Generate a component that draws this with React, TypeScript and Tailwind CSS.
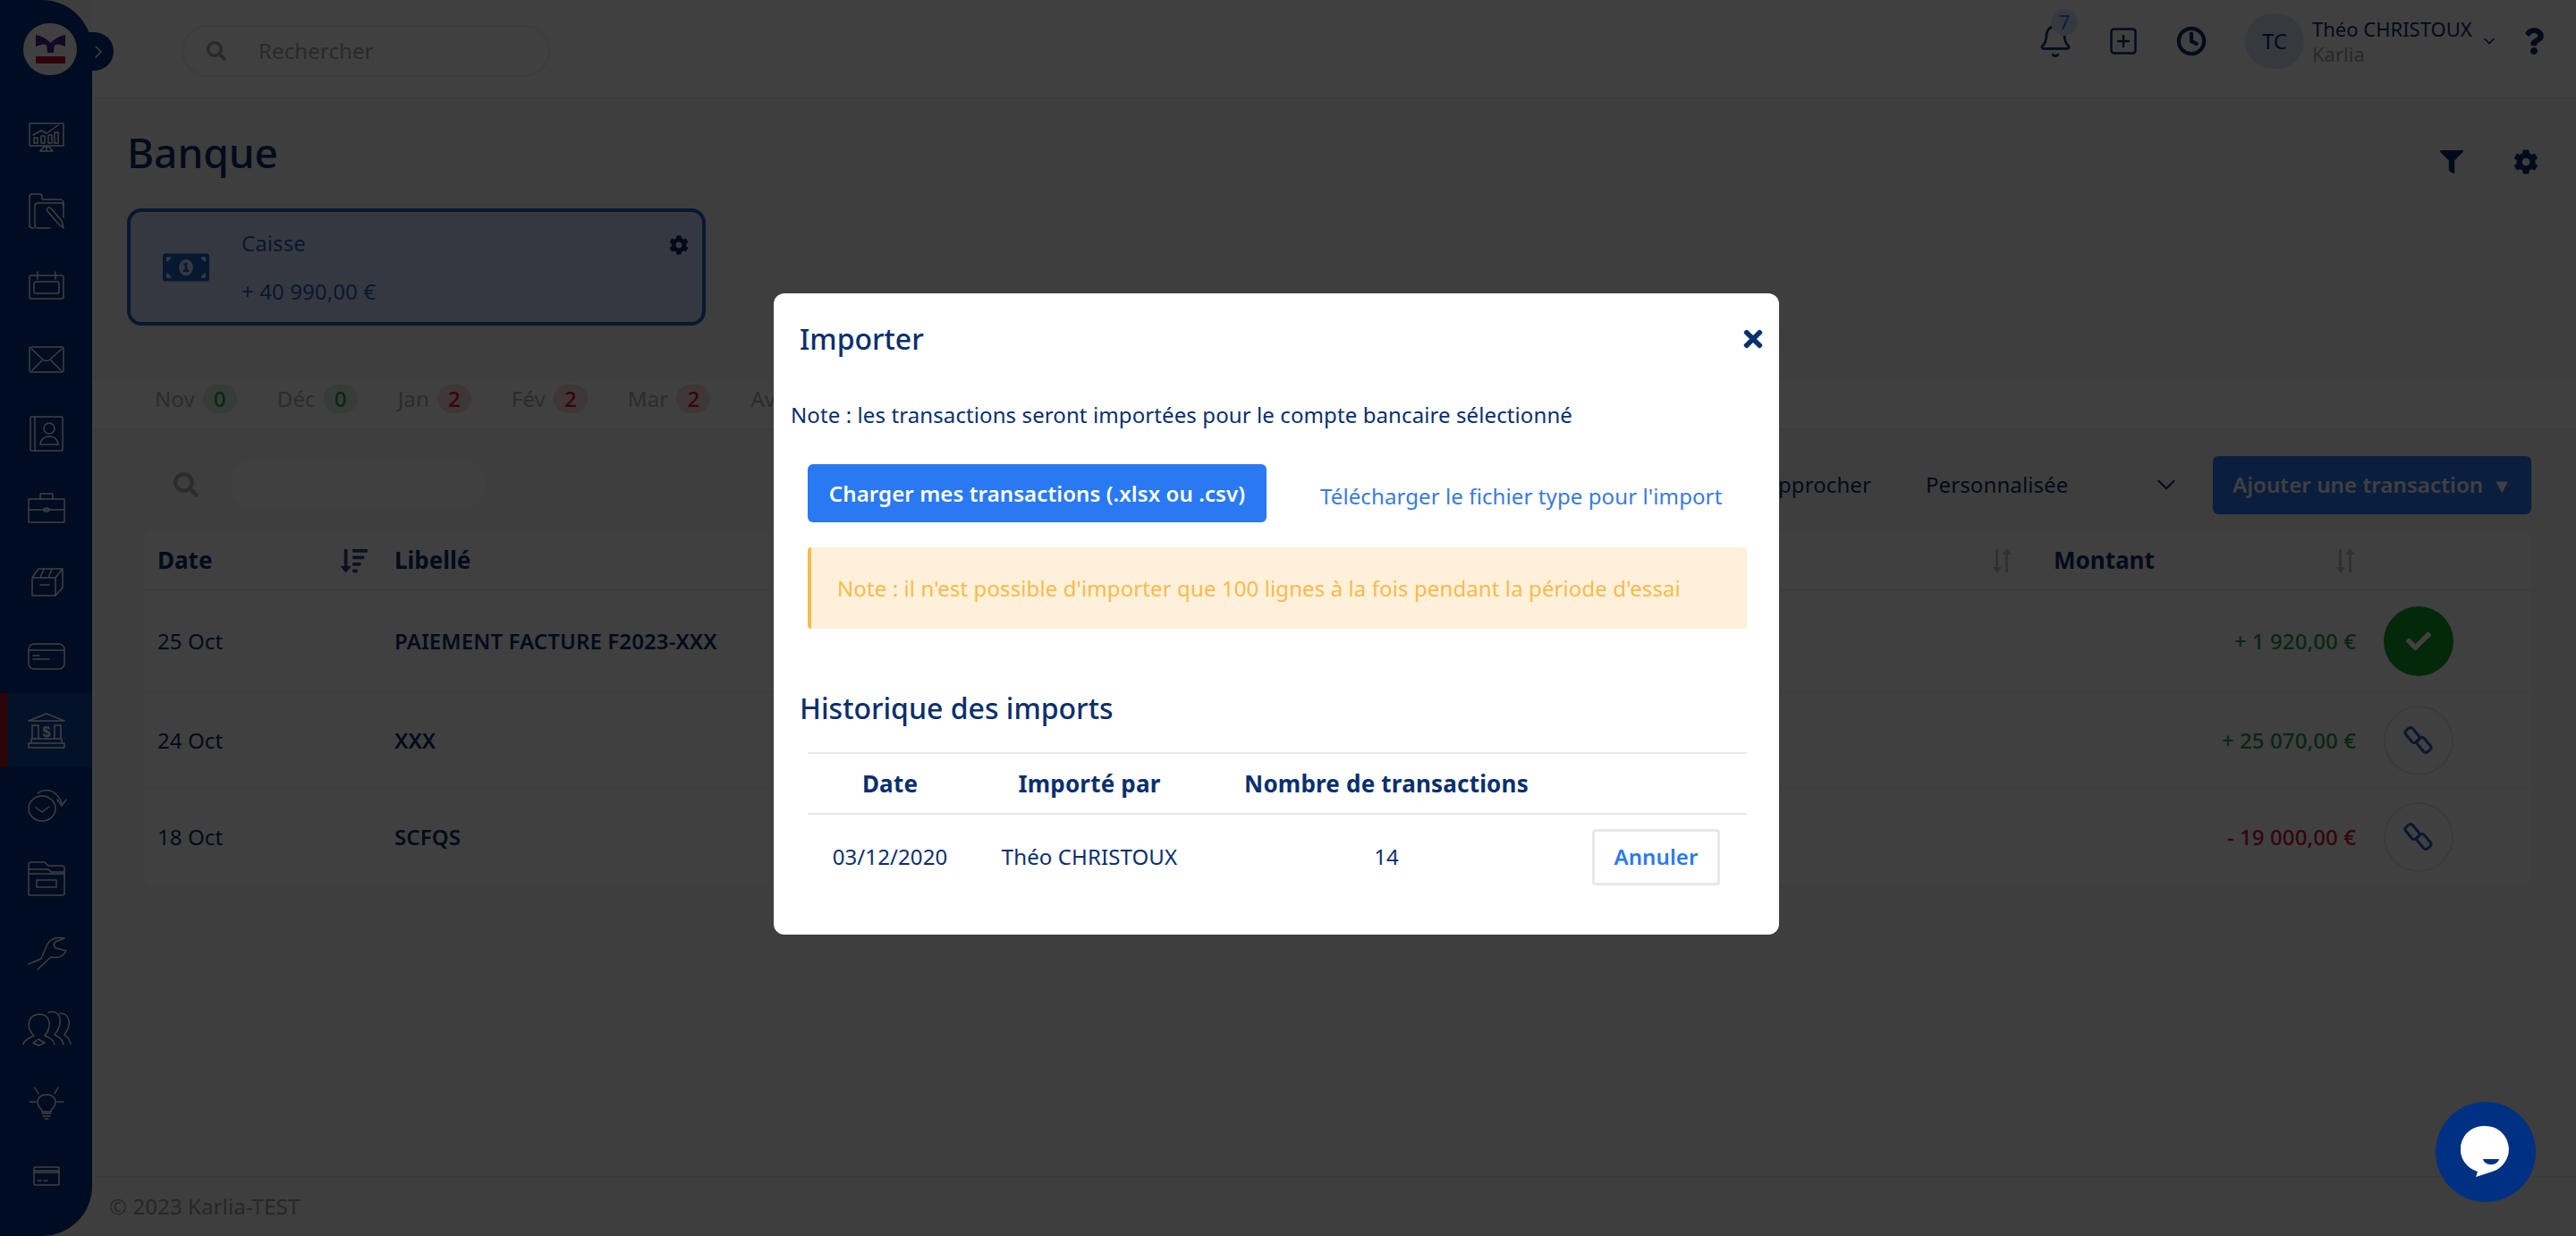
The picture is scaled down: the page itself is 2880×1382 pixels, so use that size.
import { Bell, ChevronDown, ChevronRight, Clock, SquarePlus } from 'lucide-react';
import { FaCheck, FaCog, FaFilter, FaMoneyBillAlt, FaQuestion, FaSearch, FaSortAmountDown, FaTimes } from 'react-icons/fa';
import type { ReactNode } from 'react';

const Line = ({ children, w = 48 }: { children: ReactNode; w?: number }) => (
  <svg width={w} height={48} viewBox={`0 0 ${w} 48`} fill="none" stroke="currentColor" strokeWidth="1.5" strokeLinecap="round" strokeLinejoin="round">
    {children}
  </svg>
);

const navIcons: ReactNode[] = [
  <Line key="stats"><rect x="5" y="9" width="38" height="25" /><path d="M9 22l9-5 6 3 13-9M10 31v-6h4v6zM18 31v-8h4v8zM26 31v-9h4v9zM33 31V19h4v12zM24 34v5M17 40h14l-4-5h-6z" /></Line>,
  <Line key="folder"><path d="M10 43H8a3 3 0 0 1-3-3V8a3 3 0 0 1 3-3h8a3 3 0 0 1 3 3v3h20a4 4 0 0 1 4 4v16" /><path d="M28 43H14a3 3 0 0 1-3-3V18a3 3 0 0 1 3-3h26a3 3 0 0 1 3 3" /><path d="M25 24l12 14 6 5-2-8-12-14a2.500 2.500 0 0 0-4 3z" /></Line>,
  <Line key="calendar"><rect x="5" y="13" width="38" height="26" rx="2" /><path d="M14 9v8M34 9v8" /><rect x="10" y="20" width="28" height="13" rx="2" /></Line>,
  <Line key="mail"><rect x="5" y="10" width="38" height="28" rx="2" /><path d="M7 12l13 12q4 3 8 0l13-12M8 36l11-11M40 36L29 25" /></Line>,
  <Line key="contact"><rect x="6" y="5" width="36" height="38" rx="1" /><path d="M11 5v38" /><circle cx="27" cy="18" r="6" /><path d="M17 36c0-6 5-9 10-9s10 3 10 9z" /></Line>,
  <Line key="briefcase"><rect x="4" y="14" width="40" height="26" /><path d="M4 26h40M17 14V8h14v6" /><ellipse cx="24" cy="26" rx="3" ry="2" /></Line>,
  <Line key="box"><path d="M8 19h26v20H8zM8 19l7-10h27l-8 10M34 39l8-9V9M21 9l-4 10M30 9l-4 10M17 27h10" /></Line>,
  <Line key="card"><rect x="4" y="10" width="40" height="28" rx="6" /><path d="M4 17h40M9 23h7M9 27h18" /></Line>,
  <Line key="bank"><path d="M4 13l20-8 20 8zM8 18h7v15H8zM33 18h7v15h-7zM7 33h34v5H7zM4 38h40v5H4z" /><text x="24" y="31" fontSize="16" textAnchor="middle" fill="currentColor" stroke="none" fontFamily="Liberation Sans, sans-serif" fontWeight="700">$</text></Line>,
  <Line key="check"><ellipse cx="19" cy="28" rx="15" ry="14" /><path d="M12 27l7 5 8-6M14 11c10-7 22-3 27 11M36 18l5 7 5-7" /></Line>,
  <Line key="files"><path d="M4 40V8a3 3 0 0 1 3-3h15l4 4h15a3 3 0 0 1 3 3v28a2 2 0 0 1-2 2H6a2 2 0 0 1-2-2zM4 13h22l3 3h15M4 18h40" /><rect x="13" y="25" width="22" height="8" /></Line>,
  <Line key="wrench"><path d="M4 36l14-6 6-14c3-8 11-11 20-9l-10 4-2 3 2 4 12 3c-3 6-8 9-17 7L14 42" /></Line>,
  <Line key="people" w={56}><path d="M2 43c1-6 8-8 12-10-5-4-7-11-5-17 3-8 15-9 20-3 4 6 2 15-3 20 5 2 10 4 11 10M13 41l6-4 7 4-7 3z" /><path d="M30 7c6-2 12 0 13 7 1 7-2 13-6 18 5 2 9 5 10 11" /><path d="M43 8c5 0 9 3 10 8 1 6-2 12-5 16 3 2 6 6 7 10" /></Line>,
  <Line key="bulb"><path d="M17 31c-6-6-3-15 7-15s13 9 7 15c-2 2-2 3-2 4H19c0-1 0-2-2-4zM19 37h10M20 40h8M22 43h4M5 24h7M36 24h7M11 8l4 7M37 8l-4 7" /></Line>,
  <Line key="billing"><rect x="10" y="14" width="28" height="20" rx="1" /><path d="M10 20h28M10 18h28M14 29h4M21 29h4" /></Line>,
];

const SortArrows = () => (
  <svg width="24" height="30" viewBox="0 0 24 30" className="text-[#c4c4c4]" fill="currentColor">
    <path d="M5 2h3v20h4l-5 7-5-7h3zM16 28h3V8h4L17.500 1 12 8h4z" />
  </svg>
);

const ChainIcon = () => (
  <svg width="34" height="34" viewBox="0 0 34 34" fill="none" stroke="currentColor" strokeWidth="3">
    <rect x="-8.500" y="-5" width="17" height="10" rx="3" transform="translate(10 11) rotate(50)" />
    <rect x="-8.500" y="-5" width="17" height="10" rx="3" transform="translate(23 22) rotate(50)" />
  </svg>
);

const tabs = [
  { label: 'Nov', count: 0 },
  { label: 'Déc', count: 0 },
  { label: 'Jan', count: 2 },
  { label: 'Fév', count: 2 },
  { label: 'Mar', count: 2 },
];

const rows = [
  { date: '25 Oct', label: 'PAIEMENT FACTURE F2023-XXX', amount: '+ 1 920,00 €', positive: true, done: true, h: 'h-[113px]' },
  { date: '24 Oct', label: 'XXX', amount: '+ 25 070,00 €', positive: true, done: false, h: 'h-[108px]' },
  { date: '18 Oct', label: 'SCFQS', amount: '- 19 000,00 €', positive: false, done: false, h: 'h-[107px]' },
];

const App = () => {
  return (
    <div className="relative flex h-[1382px] w-[2880px] overflow-hidden bg-[#f8f8f8] text-[24px] tracking-[0.1px] text-[#0a2f6e] font-['Noto_Sans',sans-serif]">
      <nav className="relative z-10 flex w-[103px] shrink-0 flex-col rounded-r-[56px] bg-[#003082] text-white">
        <div className="flex h-[110px] shrink-0 items-center pl-[26px]">
          <div className="flex h-[58px] w-[60px] items-center justify-center rounded-full bg-white">
            <svg width="33" height="32" viewBox="0 0 33 32">
              <path d="M0 0Q10 2 16.500 9 23 2 33 0V13Q22 8 20.500 13L20 20H13L12.500 13Q11 8 0 13z" fill="#4a2288" />
              <rect x="0" y="24" width="33" height="8" fill="#c0103a" />
            </svg>
          </div>
        </div>
        <div className="absolute left-[92px] top-[36px] flex h-[43px] w-[35px] items-center justify-center rounded-r-full bg-[#003082]">
          <ChevronRight size={24} strokeWidth={1.5} />
        </div>
        <div className="flex flex-col pt-[1px]">
          {navIcons.map((icon, i) => (
            <div key={i} className={`flex h-[83px] items-center justify-center ${i === 8 ? 'border-l-[9px] border-[#b0102f] bg-[#2979f2]/30 pr-[9px]' : ''}`}>
              {icon}
            </div>
          ))}
        </div>
      </nav>

      <div className="flex min-w-0 flex-1 flex-col">
        <header className="flex h-[110px] shrink-0 items-center border-b border-[#e6e6e6] bg-white pl-[100px]">
          <div className="mt-[5px] flex h-[58px] w-[412px] items-center rounded-full border-2 border-[#eeeeee] pl-[26px] text-[#a8a8a8]">
            <FaSearch size={22} />
            <span className="ml-[36px]">Rechercher</span>
          </div>
          <div className="mb-[18px] ml-auto flex items-center">
            <div className="relative">
              <Bell size={40} strokeWidth={1.6} />
              <span className="absolute left-[15px] top-[-16px] flex h-[30px] w-[30px] items-center justify-center rounded-full bg-[#d7e6fb] text-[22px] text-[#2979f2]">7</span>
            </div>
            <SquarePlus size={36} strokeWidth={1.6} className="ml-[38px]" />
            <Clock size={34} strokeWidth={3} className="ml-[41px]" />
            <div className="ml-[43px] flex h-[62px] w-[66px] items-center justify-center rounded-full bg-[#d7e6fb] text-[24px]">TC</div>
            <div className="ml-[9px] flex w-[182px] flex-col text-[22px] leading-[28px] tracking-normal">
              <span className="whitespace-nowrap">Théo CHRISTOUX</span>
              <span className="text-[#a0a0a0]">Karlia</span>
            </div>
            <ChevronDown size={20} strokeWidth={2} className="ml-[6px] mr-[25px]" />
            <FaQuestion size={30} className="mr-[32px]" />
          </div>
        </header>

        <main className="flex min-h-0 flex-1 flex-col">
          <div className="flex items-start justify-between pl-[39px] pr-[42px] pt-[29px]">
            <h1 className="text-[46px] font-medium leading-[62px] tracking-normal">Banque</h1>
            <div className="mt-[28px] flex items-center gap-[56px]">
              <FaFilter size={26} />
              <FaCog size={28} />
            </div>
          </div>
          <div className="ml-[39px] mt-[32px] flex h-[131px] w-[647px] items-center rounded-[16px] border-4 border-[#1f5fc4] bg-[#d1e4fc] pl-[36px] pr-[15px]">
            <FaMoneyBillAlt size={52} className="text-[#1f5fc4]" />
            <div className="ml-[36px] flex flex-1 flex-col gap-[26px] leading-[28px] text-[#1f5fc4]">
              <span>Caisse</span>
              <span>+ 40 990,00 €</span>
            </div>
            <FaCog size={22} className="mb-[50px] text-[#00296b]" />
          </div>

          <div className="mt-[62px] flex h-[54px] items-start gap-[45px] border-b border-[#e6e6e6] bg-white pl-[70px] pt-[2px]">
            {tabs.map((t) => (
              <div key={t.label} className="flex items-center gap-[9px] text-[#b0b0b0]">
                <span>{t.label}</span>
                <span className={`flex h-[32px] w-[38px] items-center justify-center rounded-full font-medium ${t.count === 0 ? 'bg-[#d6f0dc] text-[#1f9d4c]' : 'bg-[#f8d7da] text-[#d0103a]'}`}>{t.count}</span>
              </div>
            ))}
            <span className="text-[#b0b0b0]">Av</span>
          </div>

          <div className="flex h-[114px] shrink-0 items-center pl-[91px] pr-[50px] pt-[10px]">
            <FaSearch size={28} className="text-[#b0b0b0]" />
            <div className="ml-[36px] h-[58px] w-[285px] rounded-full bg-white" />
            <div className="ml-auto flex items-center">
              <span className="mr-[45px]">Rapprocher</span>
              <div className="flex h-[58px] w-[317px] items-center justify-between rounded-[24px] border border-[#eeeeee] pl-[15px] pr-[14px]">
                <span>Personnalisée</span>
                <ChevronDown size={34} strokeWidth={1.5} />
              </div>
              <button className="ml-[20px] flex h-[65px] w-[356px] items-center justify-center rounded-[6px] bg-[#2979f2] font-semibold text-white">
                Ajouter une transaction
                <span className="ml-[10px] text-[22px]">▼</span>
              </button>
            </div>
          </div>

          <div className="ml-[58px] mr-[50px] flex h-[67px] shrink-0 items-center rounded-t-[10px] border-b-2 border-[#eeeeee] bg-white pl-[15px] text-[26px] font-bold tracking-normal">
            <div className="flex w-[265px] items-center justify-between pr-[30px]">
              <span>Date</span>
              <FaSortAmountDown size={30} className="text-[#2b4a80]" />
            </div>
            <div className="flex flex-1 items-center justify-between pr-[46px]">
              <span>Libellé</span>
              <SortArrows />
            </div>
            <div className="flex w-[338px] items-center justify-between">
              <span>Montant</span>
              <SortArrows />
            </div>
            <div className="w-[196px]" />
          </div>
          <div className="ml-[58px] mr-[50px] rounded-b-[10px] bg-white">
            {rows.map((r, i) => (
              <div key={r.date} className={`flex items-center pl-[15px] ${r.h} ${i < 2 ? 'border-b border-[#eeeeee]' : ''}`}>
                <div className="w-[265px]">{r.date}</div>
                <div className="flex-1 pr-[46px] font-semibold">{r.label}</div>
                <div className={`w-[338px] text-right font-medium ${r.positive ? 'text-[#1f9d4c]' : 'text-[#d0103a]'}`}>{r.amount}</div>
                <div className="w-[196px] pl-[31px]">
                  {r.done ? (
                    <div className="flex h-[78px] w-[78px] items-center justify-center rounded-full bg-[#0c9e2a] text-white">
                      <FaCheck size={28} />
                    </div>
                  ) : (
                    <div className="flex h-[78px] w-[78px] items-center justify-center rounded-full border-2 border-[#e6e6e6] text-[#1f5fc4]">
                      <ChainIcon />
                    </div>
                  )}
                </div>
              </div>
            ))}
          </div>
          <footer className="mt-auto flex h-[67px] shrink-0 items-center border-t border-[#e6e6e6] pl-[19px] text-[#9a9a9a]">
            © 2023 Karlia-TEST
          </footer>
        </main>
      </div>

      <div className="absolute inset-0 z-20 flex items-start justify-center bg-black/75 pr-[26px] pt-[328px]">
        <div className="flex h-[717px] w-[1124px] flex-col rounded-[12px] bg-white">
          <div className="flex items-center justify-between pl-[29px] pr-[14px] pt-[27px]">
            <h2 className="text-[32px] font-medium leading-[48px] tracking-normal">Importer</h2>
            <FaTimes size={30} />
          </div>
          <p className="mt-[45px] pl-[19px] leading-[32px]">Note : les transactions seront importées pour le compte bancaire sélectionné</p>
          <div className="mt-[39px] flex items-center pl-[38px]">
            <button className="flex h-[65px] w-[513px] items-center justify-center rounded-[6px] bg-[#2979f2] font-semibold text-white">
              Charger mes transactions (.xlsx ou .csv)
            </button>
            <a className="ml-[60px] mt-[6px] text-[#3a7bdc]">Télécharger le fichier type pour l'import</a>
          </div>
          <div className="ml-[38px] mt-[28px] flex h-[91px] w-[1050px] items-center rounded-[4px] border-l-4 border-[#f7bb4d] bg-[#fef0d9] pl-[29px] text-[#f7bb4d]">
            Note : il n'est possible d'importer que 100 lignes à la fois pendant la période d'essai
          </div>
          <h3 className="mt-[65px] pl-[29px] text-[32px] font-medium leading-[48px] tracking-normal">Historique des imports</h3>
          <div className="ml-[38px] mt-[25px] w-[1050px]">
            <div className="flex h-[70px] items-center border-y-2 border-[#e8e8e8] text-[26px] font-bold tracking-[0.2px]">
              <div className="w-[184px] text-center">Date</div>
              <div className="w-[262px] text-center">Importé par</div>
              <div className="w-[402px] text-center">Nombre de transactions</div>
            </div>
            <div className="flex h-[94px] items-center">
              <div className="w-[184px] text-center">03/12/2020</div>
              <div className="w-[262px] text-center">Théo CHRISTOUX</div>
              <div className="w-[402px] text-center">14</div>
              <button className="ml-[29px] flex h-[63px] w-[143px] items-center justify-center rounded-[4px] border-[3px] border-[#e8e8e8] font-semibold text-[#2979f2]">
                Annuler
              </button>
            </div>
          </div>
        </div>
      </div>

      <div className="absolute bottom-[38px] right-[45px] z-30 flex h-[112px] w-[112px] items-center justify-center rounded-full bg-[#003082]">
        <svg width="56" height="60" viewBox="0 0 56 60">
          <path d="M28 1a26 26 0 0 1 8 50.700L17 58l2-6A26 26 0 0 1 28 1z" fill="#fff" />
          <path d="M25 38h18c-1 4-5 6-9 6s-8-2-9-6z" fill="#003082" />
        </svg>
      </div>
    </div>
  );
};

export default App;
